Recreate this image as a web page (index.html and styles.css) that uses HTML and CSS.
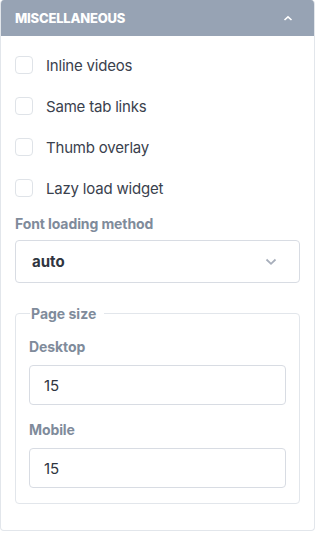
FILE: index.html
```html
<!DOCTYPE html>
<html lang="en">
<head>
  <meta charset="UTF-8" />
  <meta name="viewport" content="width=device-width, initial-scale=1.0"/>
  <title>Miscellaneous</title>
  <link rel="stylesheet" href="styles.css">
</head>
<body>
  <div class="panel">
    <div class="panel-head">
      <span class="panel-title">Miscellaneous</span>
      <svg class="head-chevron" width="10" height="6" viewBox="0 0 10 6">
        <path d="M1.5 5 L5 1.8 L8.5 5" fill="none" stroke="#fff" stroke-width="1.6" />
      </svg>
    </div>

    <div class="panel-body">
      <label class="check-row"><span class="box"></span>Inline videos</label>
      <label class="check-row"><span class="box"></span>Same tab links</label>
      <label class="check-row"><span class="box"></span>Thumb overlay</label>
      <label class="check-row"><span class="box"></span>Lazy load widget</label>

      <div class="field-label">Font loading method</div>
      <div class="select">
        <span>auto</span>
        <svg width="12" height="8" viewBox="0 0 12 8">
          <path d="M1.5 1.5 L6 5.8 L10.5 1.5" fill="none" stroke="#a7aebb" stroke-width="1.8" />
        </svg>
      </div>

      <fieldset class="group">
        <legend>Page size</legend>
        <div class="field-label">Desktop</div>
        <div class="input">15</div>
        <div class="field-label">Mobile</div>
        <div class="input">15</div>
      </fieldset>
    </div>
  </div>
</body>
</html>
```

FILE: styles.css
```css
body {
  margin: 0;
  background: #ffffff;
  font-family: 'Inter', 'Liberation Sans', sans-serif;
  color: #3a414d;
}

.panel {
  width: 315px;
  height: 531px;
  box-sizing: border-box;
  border: 1px solid #e2e6eb;
  border-top: none;
  border-radius: 4px;
  overflow: hidden;
}

.panel-head {
  height: 36px;
  background: #97a3b4;
  display: flex;
  align-items: center;
  justify-content: space-between;
  padding: 0 21px 0 14px;
}

.panel-title {
  color: #ffffff;
  font-size: 13px;
  font-weight: 800;
  text-transform: uppercase;
  letter-spacing: -0.2px;
}

.panel-body {
  padding: 20px 14px 0;
}

.check-row {
  display: flex;
  align-items: center;
  height: 18px;
  margin-bottom: 23px;
  font-size: 15px;
  letter-spacing: -0.2px;
}

.box {
  width: 16px;
  height: 16px;
  border: 1px solid #dfe3e8;
  border-radius: 4px;
  margin-right: 13px;
}

.field-label {
  font-size: 14px;
  font-weight: 700;
  color: #7f8b9b;
  margin-top: -5px;
  margin-bottom: 8px;
  letter-spacing: -0.1px;
}

.select {
  height: 43px;
  box-sizing: border-box;
  border: 1px solid #d8dce3;
  border-radius: 4px;
  display: flex;
  align-items: center;
  justify-content: space-between;
  padding: 0 22px 0 16px;
  font-size: 15px;
  font-weight: 700;
  color: #2f3540;
}

.group {
  margin: 22px 0 0;
  padding: 16px 13px 15px;
  border: 1px solid #e2e6eb;
  border-radius: 4px;
}

.group legend {
  font-size: 14px;
  font-weight: 700;
  color: #7f8b9b;
  padding: 0 8px 0 1px;
  margin-left: 1px;
}

.group .field-label {
  margin-top: 0;
  margin-bottom: 10px;
}

.input {
  height: 40px;
  box-sizing: border-box;
  border: 1px solid #d8dce3;
  border-radius: 4px;
  display: flex;
  align-items: center;
  padding: 0 14px;
  font-size: 15px;
  color: #2f3540;
  margin-bottom: 16px;
}

.input:last-child {
  margin-bottom: 0;
}
```
